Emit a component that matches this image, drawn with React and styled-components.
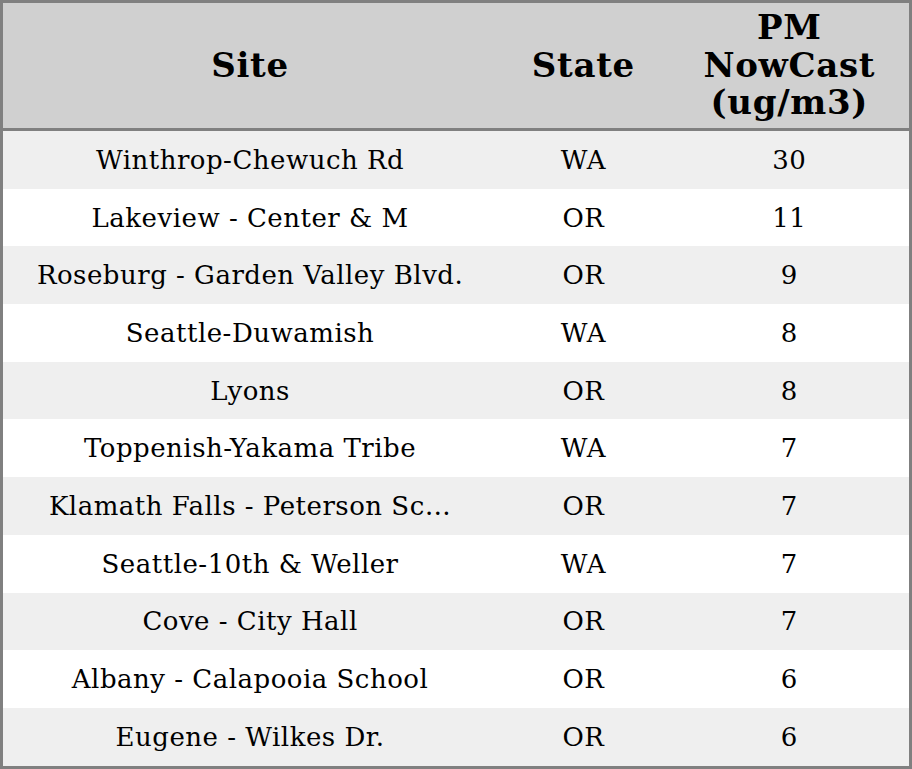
import React from 'react';
import styled, {createGlobalStyle} from 'styled-components';

const GlobalStyle = createGlobalStyle`
html, body {
    margin: 0;
    padding: 0;
    background: #ffffff;
}
body {
    font-family: "DejaVu Serif", "Liberation Serif", serif;
}`;

const rows = [
    {site: 'Winthrop-Chewuch Rd', state: 'WA', pm: 30},
    {site: 'Lakeview - Center & M', state: 'OR', pm: 11},
    {site: 'Roseburg - Garden Valley Blvd.', state: 'OR', pm: 9},
    {site: 'Seattle-Duwamish', state: 'WA', pm: 8},
    {site: 'Lyons', state: 'OR', pm: 8},
    {site: 'Toppenish-Yakama Tribe', state: 'WA', pm: 7},
    {site: 'Klamath Falls - Peterson Sc\u2026', state: 'OR', pm: 7},
    {site: 'Seattle-10th & Weller', state: 'WA', pm: 7},
    {site: 'Cove - City Hall', state: 'OR', pm: 7},
    {site: 'Albany - Calapooia School', state: 'OR', pm: 6},
    {site: 'Eugene - Wilkes Dr.', state: 'OR', pm: 6},
];

const App = () => {
  return (
    <>
      <GlobalStyle />
      <Table>
        <colgroup>
          <col style={{width: 494}} />
          <col style={{width: 172}} />
          <col style={{width: 240}} />
        </colgroup>
        <thead>
          <tr>
            <Th>Site</Th>
            <Th>State</Th>
            <Th>PM<br />NowCast<br />(ug/m3)</Th>
          </tr>
        </thead>
        <tbody>
          {rows.map((r, i) => (
            <Row key={r.site} $striped={i % 2 === 0}>
              <Td>{r.site}</Td>
              <Td>{r.state}</Td>
              <Td>{r.pm}</Td>
            </Row>
          ))}
        </tbody>
      </Table>
    </>
  )
}

const Table = styled.table`
width: 912px;
border-collapse: collapse;
table-layout: fixed;
border: 3px solid #808080;
color: #000;`;

const Th = styled.th`
height: 125px;
padding: 0;
background: #d0d0d0;
border-bottom: 3px solid #808080;
font-size: 34px;
font-weight: bold;
letter-spacing: 0.7px;
line-height: 37.5px;
text-align: center;
vertical-align: middle;`;

const Row = styled.tr`
background: ${p => p.$striped ? '#efefef' : '#ffffff'};`;

const Td = styled.td`
height: 57.7px;
padding: 0;
font-size: 26px;
letter-spacing: 0.5px;
text-align: center;
vertical-align: middle;
white-space: nowrap;`;

export default App
